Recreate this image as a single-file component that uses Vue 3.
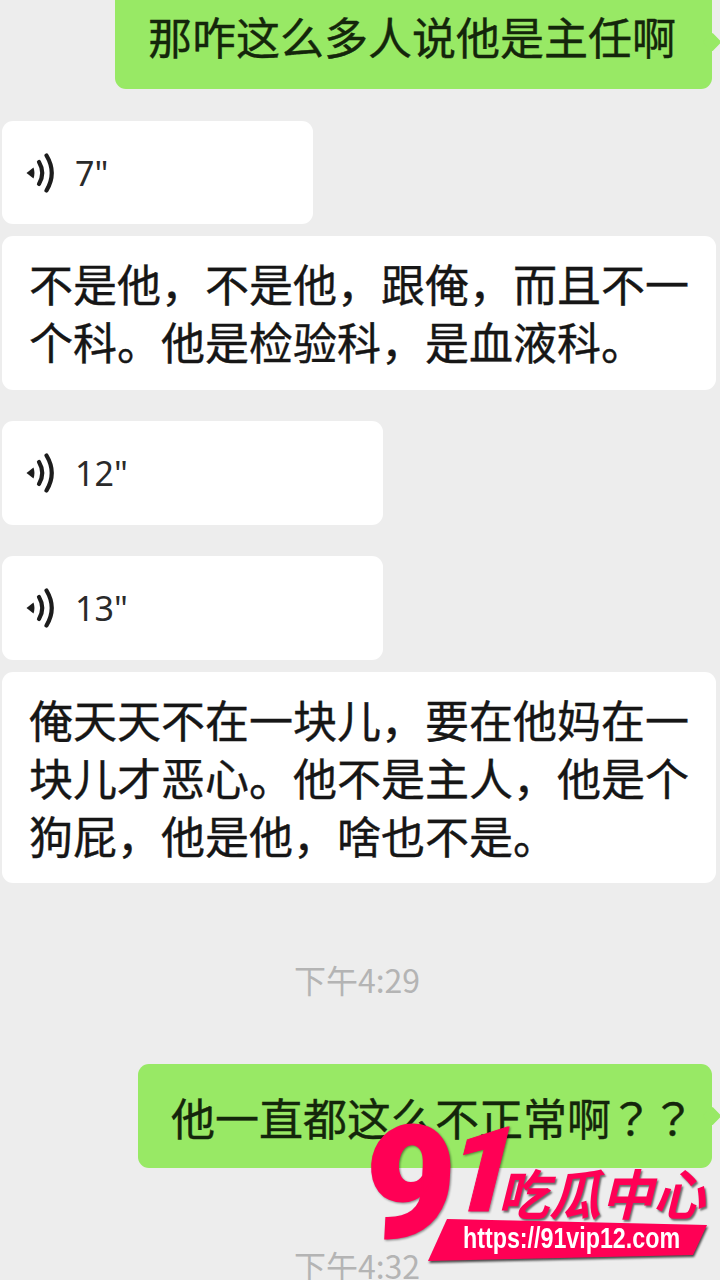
<script setup>
const items = [
  { type: 'voice', secs: '7"', width: 311, h: 103, gap: 32 },
  { type: 'text', lines: ['不是他，不是他，跟俺，而且不一', '个科。他是检验科，是血液科。'], gap: 12, h: 154 },
  { type: 'voice', secs: '12"', width: 381, h: 104, gap: 31 },
  { type: 'voice', secs: '13"', width: 381, h: 104, gap: 31 },
  { type: 'text', lines: ['俺天天不在一块儿，要在他妈在一', '块儿才恶心。他不是主人，他是个', '狗屁，他是他，啥也不是。'], gap: 12, h: 211 },
]
</script>

<template>
  <div class="chat">
    <div class="bubble green first">那咋这么多人说他是主任啊</div>

    <div
      v-for="(m, i) in items"
      :key="i"
      class="bubble white"
      :class="m.type"
      :style="{ marginTop: m.gap + 'px', width: m.width ? m.width + 'px' : null, height: m.h + 'px' }"
    >
      <template v-if="m.type === 'voice'">
        <svg class="wave" width="30" height="40" viewBox="0 0 30 40">
          <path d="M0.5 20 L7.5 14.5 Q9.4 20 7.5 25.5 Z" fill="#1c1c1c" />
          <path d="M13 9 Q19.5 20 13 31" />
          <path d="M20.5 2.5 Q31 20 20.5 37.5" />
        </svg>
        <span class="secs">{{ m.secs }}</span>
      </template>
      <template v-else>
        <div v-for="l in m.lines" :key="l" class="line">{{ l }}</div>
      </template>
    </div>

    <div class="time t1">下午4:29</div>

    <div class="bubble green second">他一直都这么不正常啊<span class="q">？？</span></div>

    <div class="time t2">下午4:32</div>

    <div class="logo">
      <div class="big">
        <span class="nine">9</span>
        <span class="one">1</span>
      </div>
      <span class="cn">吃瓜中心</span>
      <div class="banner-wrap">
        <div class="banner"><span>https://91vip12.com</span></div>
      </div>
    </div>
  </div>
</template>

<style>
html, body { margin: 0; background: #ededed; }
body { height: 1280px; overflow: hidden; }
</style>

<style scoped>
.chat {
  position: relative;
  width: 720px;
  height: 1280px;
  overflow: hidden;
  background: #ededed;
  display: flex;
  flex-direction: column;
  font-family: "Noto Sans CJK SC", "Noto Sans", sans-serif;
  color: #161616;
}
.bubble {
  flex: none;
  box-sizing: border-box;
  border-radius: 11px;
  font-size: 44px;
  -webkit-text-stroke: 0.4px currentColor;
}
.green {
  position: relative;
  background: #98e965;
  align-self: flex-end;
  margin-right: 8px;
  width: 574px;
  white-space: nowrap;
  color: #14260b;
}
.green::after {
  content: "";
  position: absolute;
  right: -8px;
  width: 16px;
  height: 16px;
  background: #98e965;
  transform: rotate(45deg) scale(0.85);
  border-radius: 2px;
}
.first {
  width: 597px;
  height: 89px;
  border-radius: 0 0 11px 11px;
  padding: 4px 0 0 33px;
  line-height: 64px;
}
.first::after { top: 34px; }
.second {
  margin-top: 65px;
  height: 104px;
  padding: 21px 0 0 33px;
  line-height: 64px;
}
.second::after { top: 44px; }
.q {
  font-family: "Noto Sans CJK JP", sans-serif;
  letter-spacing: -2px;
  margin-left: -2px;
}
.white {
  background: #fff;
  margin-left: 2px;
  width: 714px;
}
.voice {
  display: flex;
  align-items: center;
  padding-left: 24px;
  -webkit-text-stroke: 0;
}
.wave { flex: none; }
.wave path:not(:first-child) {
  fill: none;
  stroke: #1c1c1c;
  stroke-width: 4.2;
  stroke-linecap: round;
}
.secs {
  margin-left: 19px;
  font-family: "Noto Sans", sans-serif;
  font-size: 34px;
  color: #2a2a2a;
}
.text {
  padding: 18px 0 0 27px;
  white-space: nowrap;
}
.line {
  height: 58px;
  line-height: 58px;
}
.time {
  flex: none;
  align-self: center;
  margin-left: -6px;
  font-size: 32px;
  color: #b4b4b4;
  line-height: 40px;
}
.t1 { margin-top: 76px; }
.t2 { margin-top: 77px; }

.logo {
  position: absolute;
  inset: 0;
  color: #ff0055;
  pointer-events: none;
}
.big {
  position: absolute;
  inset: 0;
  filter: drop-shadow(1px 1px 1px rgba(0, 0, 0, 0.45));
}
.nine, .one {
  position: absolute;
  font-family: Roboto, sans-serif;
  font-weight: 900;
  line-height: 1;
  white-space: nowrap;
}
.nine {
  left: 365px;
  top: 1106px;
  font-size: 156px;
  -webkit-text-stroke: 2px #ff0055;
  transform: skewX(-3deg);
}
.one {
  left: 450px;
  top: 1112px;
  font-size: 118px;
  -webkit-text-stroke: 1px #ff0055;
  transform: skewX(-14deg);
}
.cn {
  position: absolute;
  left: 503px;
  top: 1160px;
  font-size: 54px;
  line-height: 64px;
  font-weight: 700;
  white-space: nowrap;
  transform: skewX(-14deg) scaleX(0.96);
  transform-origin: left center;
  text-shadow: 2px 2px 2px rgba(0, 0, 0, 0.55);
}
.banner-wrap {
  position: absolute;
  left: 428px;
  top: 1219px;
  filter: drop-shadow(1px 2px 1px rgba(0, 0, 0, 0.7));
}
.banner {
  position: relative;
  width: 280px;
  height: 42px;
  background: #ff0055;
  clip-path: polygon(19px 0, 279px 6px, 265px 36px, 0 42px);
}
.banner span {
  position: absolute;
  left: 35px;
  top: 1px;
  font-family: "Liberation Sans", sans-serif;
  font-weight: 700;
  font-size: 30px;
  line-height: 36px;
  color: #fff;
  white-space: nowrap;
  transform: scaleX(0.775);
  transform-origin: left center;
}
</style>
